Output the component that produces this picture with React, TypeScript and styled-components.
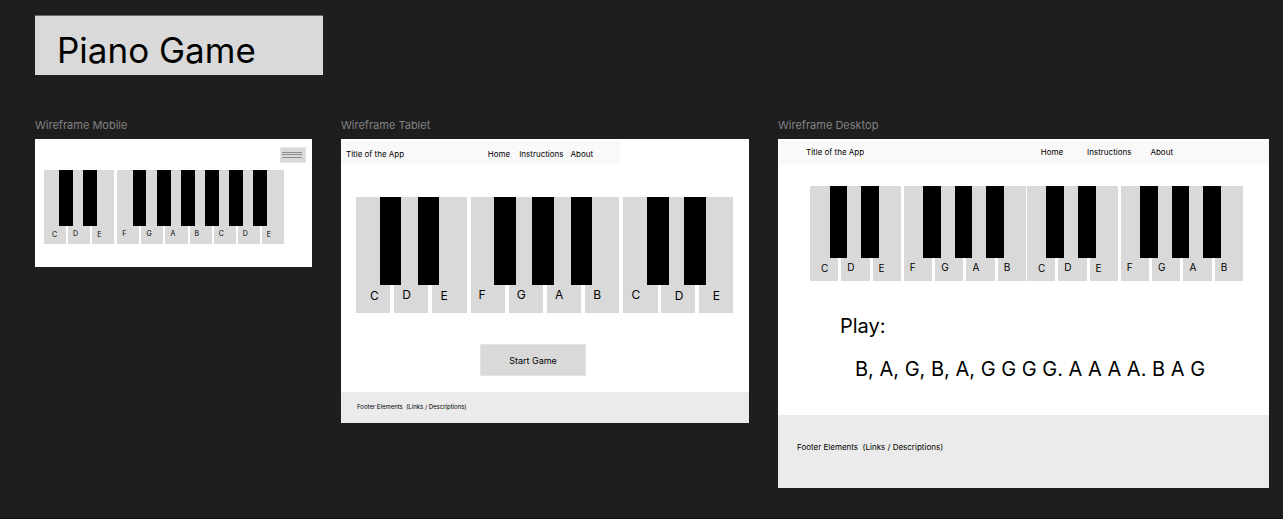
import React from "react";
import styled, { createGlobalStyle } from "styled-components";

const GlobalStyle = createGlobalStyle`
  *, *::before, *::after { box-sizing: border-box; }
  body {
    margin: 0;
    background: #1e1e1e;
    color: #000;
    font-family: Inter, "Liberation Sans", sans-serif;
  }
`;

type Note = {
  name: string;
  sharp?: boolean;
  /* distance of the letter from the left edge of its key */
  inset?: number;
  /* the letter sits slightly lower on the key */
  low?: boolean;
  /* space before the key where it differs from the keyboard's gap */
  space?: number;
};

type Scale = {
  height: number;
  sharpHeight: number;
  gap: number;
  inset: number;
  font: number;
  base: number;
};

const Page = styled.main`
  min-height: 100vh;
  padding: 15px 14px 30px 35px;
  border-bottom: 1px solid #111;
`;

const Title = styled.h1`
  width: 288px;
  max-width: 100%;
  margin: 0 0 43px;
  padding: 13px 22px 3px;
  border-top: 1px solid #6e6a6a;
  background: #d9d9d9;
  font-size: 35px;
  font-weight: 400;
  line-height: 43px;
`;

const Board = styled.div`
  display: grid;
  grid-template-columns: 277fr 408fr 491fr;
  align-items: start;
  gap: 29px;
`;

const FrameName = styled.h2`
  margin: 0 0 6px;
  color: #828282;
  font-size: 11px;
  font-weight: 400;
  line-height: 15px;
`;

const Screen = styled.div<{ $bottom?: number }>`
  padding-bottom: ${(p) => p.$bottom ?? 0}px;
  background: #fff;
`;

const MenuRow = styled.div`
  display: flex;
  justify-content: flex-end;
  padding: 8px 6px 7px;
`;

const MenuButton = styled.button`
  display: flex;
  width: 26px;
  height: 16px;
  padding: 0;
  border: 1px solid #e4e4e4;
  background: #d9d9d9;
`;

const NavBar = styled.header<{ $width: string; $padding: string }>`
  display: flex;
  align-items: center;
  justify-content: space-between;
  width: ${(p) => p.$width};
  height: 26px;
  padding: ${(p) => p.$padding};
  border-top: 2px solid #fff;
  background: #f9f9f9;
  font-size: 8px;
  line-height: 10px;
`;

const Links = styled.nav<{ $gaps: [number, number] }>`
  display: flex;
  a { color: #000; text-decoration: none; }
  a + a { margin-left: ${(p) => p.$gaps[0]}px; }
  a + a + a { margin-left: ${(p) => p.$gaps[1]}px; }
`;

const Keys = styled.div<{ $margin: string }>`
  display: flex;
  margin: ${(p) => p.$margin};
`;

const WhiteKey = styled.button<{ $scale: Scale; $space: number }>`
  position: relative;
  display: flex;
  flex: 1 1 0;
  align-items: flex-end;
  min-width: 0;
  height: ${(p) => p.$scale.height}px;
  margin: 0 0 0 ${(p) => p.$space}px;
  padding: 0;
  border: 0;
  background: #d9d9d9;
  color: #000;
  font: 400 ${(p) => p.$scale.font}px/${(p) => p.$scale.font}px Inter, "Liberation Sans", sans-serif;
`;

const Letter = styled.span<{ $bottom: number; $inset: number }>`
  padding: 0 0 ${(p) => p.$bottom}px ${(p) => p.$inset}px;
`;

const BlackKey = styled.span<{ $height: number }>`
  position: absolute;
  z-index: 1;
  top: 0;
  left: 69%;
  width: 63%;
  height: ${(p) => p.$height}px;
  background: #000;
`;

const StartButton = styled.button`
  display: block;
  width: 106px;
  height: 32px;
  margin: 31px auto 16px 139px;
  padding: 2px 0 0;
  border: 1px solid #e4e4e4;
  background: #d9d9d9;
  color: #000;
  font: 400 9px/12px Inter, "Liberation Sans", sans-serif;
`;

const Footer = styled.footer<{ $padding: string; $font: number }>`
  padding: ${(p) => p.$padding};
  background: #ebebeb;
  font-size: ${(p) => p.$font}px;
  line-height: 10px;
  white-space: pre;
`;

const Song = styled.section`
  padding: 32px 0 33px 62px;
  font-size: 20px;
  line-height: 26px;
`;

const SongTitle = styled.h3`
  margin: 0 0 17px;
  font-size: 20px;
  font-weight: 400;
`;

const SongNotes = styled.p`
  margin: 0 0 0 15px;
  white-space: nowrap;
`;

const mobileScale: Scale = { height: 74, sharpHeight: 56, gap: 2, inset: 5, font: 7, base: 7 };
const tabletScale: Scale = { height: 116, sharpHeight: 88, gap: 4, inset: 8, font: 12, base: 12 };
const desktopScale: Scale = { height: 95, sharpHeight: 72, gap: 3, inset: 6, font: 10, base: 9 };

const mobileNotes: Note[] = [
  { name: "C", sharp: true, inset: 8, low: true },
  { name: "D", sharp: true },
  { name: "E", low: true },
  { name: "F", sharp: true, space: 3 },
  { name: "G", sharp: true },
  { name: "A", sharp: true },
  { name: "B", sharp: true },
  { name: "C", sharp: true },
  { name: "D", sharp: true },
  { name: "E", low: true },
];

const tabletNotes: Note[] = [
  { name: "C", sharp: true, inset: 14, low: true },
  { name: "D", sharp: true },
  { name: "E", low: true },
  { name: "F", sharp: true },
  { name: "G", sharp: true },
  { name: "A", sharp: true },
  { name: "B" },
  { name: "C", sharp: true },
  { name: "D", sharp: true, inset: 14, low: true, space: 3 },
  { name: "E", inset: 14, low: true },
];

const octave: Note[] = [
  { name: "C", sharp: true, inset: 11, low: true },
  { name: "D", sharp: true },
  { name: "E", low: true },
  { name: "F", sharp: true },
  { name: "G", sharp: true },
  { name: "A", sharp: true },
  { name: "B" },
];

const desktopNotes: Note[] = [...octave, { ...octave[0], space: 1 }, ...octave.slice(1)];

function Keyboard({ notes, scale, margin }: { notes: Note[]; scale: Scale; margin: string }) {
  return (
    <Keys $margin={margin}>
      {notes.map((note, i) => (
        <WhiteKey
          key={i}
          type="button"
          $scale={scale}
          $space={i === 0 ? 0 : note.space ?? scale.gap}
        >
          <Letter $inset={note.inset ?? scale.inset} $bottom={scale.base - (note.low ? 1 : 0)}>
            {note.name}
          </Letter>
          {note.sharp && <BlackKey $height={scale.sharpHeight} />}
        </WhiteKey>
      ))}
    </Keys>
  );
}

function SiteNav({ gaps }: { gaps: [number, number] }) {
  return (
    <Links $gaps={gaps}>
      <a href="#home">Home</a>
      <a href="#instructions">Instructions</a>
      <a href="#about">About</a>
    </Links>
  );
}

const footerText = "Footer Elements  (Links / Descriptions)";

export default function App() {
  return (
    <Page>
      <GlobalStyle />
      <Title>Piano Game</Title>
      <Board>
        <section>
          <FrameName>Wireframe Mobile</FrameName>
          <Screen $bottom={23}>
            <MenuRow>
              <MenuButton type="button" aria-label="Menu">
                <svg width="24" height="14" viewBox="0 0 24 14" stroke="#8c8c8c" strokeWidth="1">
                  <path d="M1 4.5h20M1 6.5h20M1 9.5h20" />
                </svg>
              </MenuButton>
            </MenuRow>
            <Keyboard notes={mobileNotes} scale={mobileScale} margin="0 28px 0 9px" />
          </Screen>
        </section>
        <section>
          <FrameName>Wireframe Tablet</FrameName>
          <Screen>
            <NavBar $width="68.4%" $padding="2px 27px 0 5px">
              <span>Title of the App</span>
              <SiteNav gaps={[9, 7]} />
            </NavBar>
            <Keyboard notes={tabletNotes} scale={tabletScale} margin="32px 16px 0 15px" />
            <StartButton type="button">Start Game</StartButton>
            <Footer $padding="10px 16px 11px" $font={6}>{footerText}</Footer>
          </Screen>
        </section>
        <section>
          <FrameName>Wireframe Desktop</FrameName>
          <Screen>
            <NavBar $width="100%" $padding="0 96px 2px 28px">
              <span>Title of the App</span>
              <SiteNav gaps={[24, 19]} />
            </NavBar>
            <Keyboard notes={desktopNotes} scale={desktopScale} margin="21px 26px 0 32px" />
            <Song>
              <SongTitle>Play:</SongTitle>
              <SongNotes>B, A, G, B, A, G G G G. A A A A. B A G</SongNotes>
            </Song>
            <Footer $padding="27px 19px 36px" $font={8}>{footerText}</Footer>
          </Screen>
        </section>
      </Board>
    </Page>
  );
}
